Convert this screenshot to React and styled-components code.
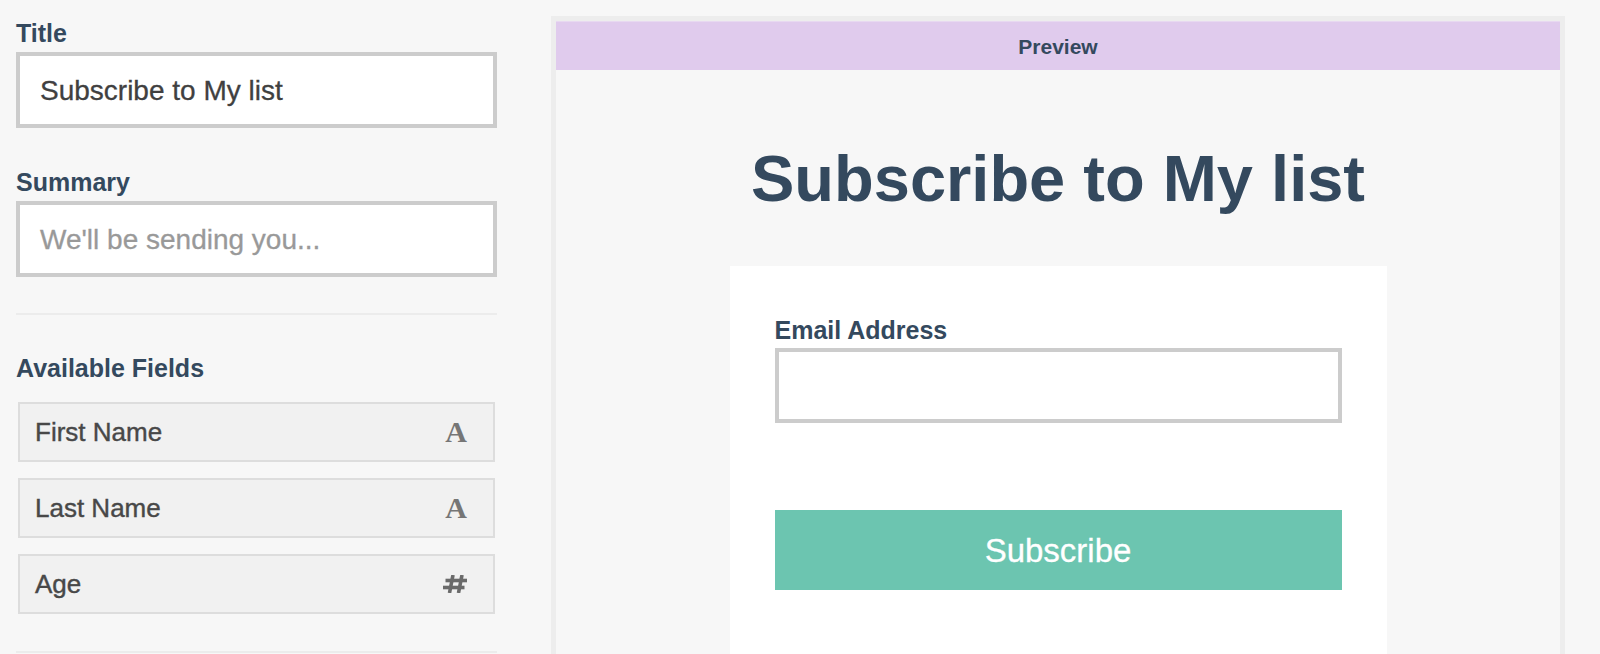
import React from 'react';
import styled, { createGlobalStyle } from 'styled-components';

const GlobalStyle = createGlobalStyle`
  html, body {
    margin: 0;
    padding: 0;
    background: #f7f7f7;
    overflow: hidden;
    font-family: "Liberation Sans", Arial, sans-serif;
  }
`;

// Page layout
const Page = styled.div`
  display: flex;
  align-items: flex-start;
  padding-left: 16px;
  height: 654px;
`;

const Sidebar = styled.div`
  width: 481px;
  display: flex;
  flex-direction: column;
  padding-top: 21px;
`;

const Label = styled.div`
  font-size: 25px;
  line-height: 25px;
  font-weight: 700;
  color: #34495e;
  margin-bottom: ${(p) => p.$gap || 6}px;
`;

const TextBox = styled.div`
  box-sizing: border-box;
  height: 76px;
  border: 4px solid #cccccc;
  background: #ffffff;
  display: flex;
  align-items: center;
  padding: 1px 20px 0;
  font-size: 28px;
  -webkit-text-stroke: 0.3px currentColor;
  color: ${(p) => (p.$placeholder ? '#999999' : '#404040')};
  margin-bottom: ${(p) => p.$after || 0}px;
`;

const Divider = styled.div`
  height: 2px;
  background: #ececec;
  margin-bottom: ${(p) => p.$after || 0}px;
`;

const FieldList = styled.div`
  display: flex;
  flex-direction: column;
  gap: 16px;
  padding: 0 2px;
  margin-bottom: 37px;
`;

const FieldItem = styled.div`
  box-sizing: border-box;
  height: 60px;
  border: 2px solid #dddddd;
  background: #f1f1f1;
  display: flex;
  align-items: center;
  justify-content: space-between;
  padding: 0 26px 0 15px;
  font-size: 26px;
  -webkit-text-stroke: 0.4px currentColor;
  color: #484848;
`;

const SerifGlyph = styled.span`
  font-family: "Liberation Serif", "Times New Roman", serif;
  font-size: 30px;
  font-weight: 700;
  -webkit-text-stroke: 0;
  color: #767676;
  line-height: 1;
`;

// Preview panel
const PreviewPanel = styled.div`
  margin-left: 54px;
  margin-top: 16px;
  width: 1014px;
  box-sizing: border-box;
  border: 5px solid #ededed;
  border-bottom: none;
  background: #f7f7f7;
  display: flex;
  flex-direction: column;
  align-items: center;
  min-height: 700px;
`;

const PreviewHeader = styled.div`
  align-self: stretch;
  height: 49px;
  box-sizing: border-box;
  padding-top: 2px;
  background: #e0cbed;
  border-top: 1px solid #e8d9f1;
  display: flex;
  align-items: center;
  justify-content: center;
  font-size: 21px;
  font-weight: 700;
  color: #34495e;
`;

const FormTitle = styled.h1`
  margin: 76px 0 55px;
  font-size: 65px;
  line-height: 65px;
  font-weight: 700;
  color: #34495e;
  white-space: nowrap;
`;

const Card = styled.div`
  width: 657px;
  box-sizing: border-box;
  background: #ffffff;
  padding: 52px 45px 80px;
  display: flex;
  flex-direction: column;
`;

const EmailInput = styled.div`
  box-sizing: border-box;
  height: 75px;
  border: 4px solid #cccccc;
  background: #ffffff;
  margin-bottom: 87px;
`;

const SubmitButton = styled.button`
  height: 80px;
  border: none;
  background: #6cc5b0;
  color: #ffffff;
  font-family: "Liberation Sans", Arial, sans-serif;
  font-size: 33px;
  -webkit-text-stroke: 0.3px #ffffff;
  padding: 2px 0 0;
  cursor: pointer;
`;

const HashIcon = () => (
  <svg width="24" height="18" viewBox="0 0 24 18">
    <g stroke="#6a6a6a" strokeWidth="3.6" strokeLinecap="butt">
      <line x1="10" y1="0" x2="6.5" y2="18" />
      <line x1="19" y1="0" x2="15.5" y2="18" />
      <line x1="2.5" y1="5.5" x2="24" y2="5.5" />
      <line x1="0" y1="12.5" x2="21.5" y2="12.5" />
    </g>
  </svg>
);

const fields = [
  { name: 'First Name', type: 'text' },
  { name: 'Last Name', type: 'text' },
  { name: 'Age', type: 'number' },
];

const FieldIcon = ({ type }) =>
  type === 'number' ? <HashIcon /> : <SerifGlyph>A</SerifGlyph>;

export default function App() {
  return (
    <>
      <GlobalStyle />
      <Page>
        <Sidebar>
          <Label>Title</Label>
          <TextBox $after={42}>Subscribe to My list</TextBox>
          <Label>Summary</Label>
          <TextBox $placeholder $after={36}>We'll be sending you...</TextBox>
          <Divider $after={41} />
          <Label $gap={21}>Available Fields</Label>
          <FieldList>
            {fields.map((f) => (
              <FieldItem key={f.name}>
                {f.name}
                <FieldIcon type={f.type} />
              </FieldItem>
            ))}
          </FieldList>
          <Divider />
        </Sidebar>

        <PreviewPanel>
          <PreviewHeader>Preview</PreviewHeader>
          <FormTitle>Subscribe to My list</FormTitle>
          <Card>
            <Label $gap={5}>Email Address</Label>
            <EmailInput />
            <SubmitButton>Subscribe</SubmitButton>
          </Card>
        </PreviewPanel>
      </Page>
    </>
  );
}
